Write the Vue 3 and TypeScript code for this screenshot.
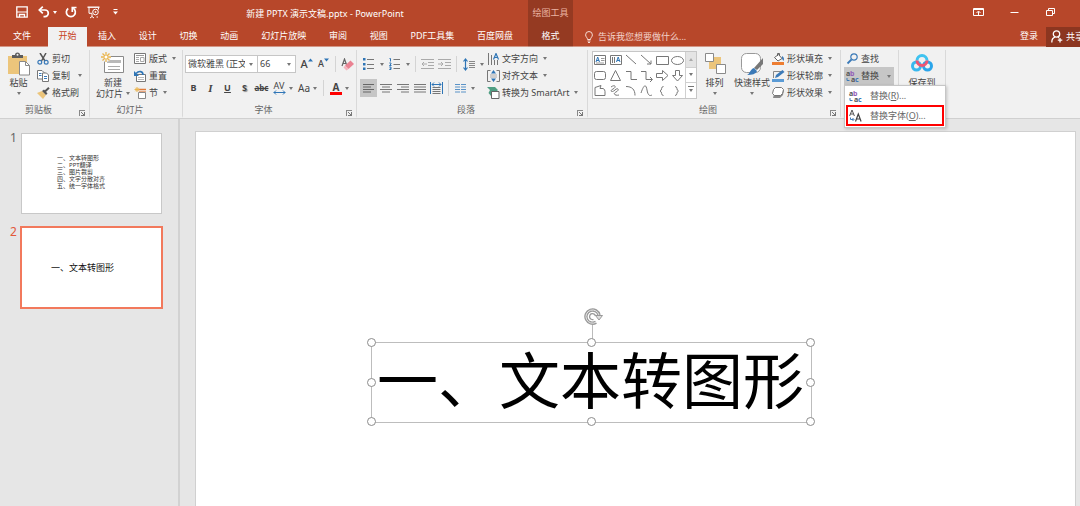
<script setup lang="ts">
import { ref } from 'vue'

const leadTabs: string[] = ['插入', '设计', '切换', '动画', '幻灯片放映', '审阅', '视图', 'PDF工具集', '百度网盘']
const outline: string[] = ['一、文本转图形', '二、PPT翻译', '三、图片裁剪', '四、文字分散对齐', '五、统一字体格式']
const handles: string[] = ['nw', 'n', 'ne', 'e', 'se', 's', 'sw', 'w']
const fontName = ref('微软雅黑 (正文)')
const fontSize = ref('66')
const query = ref('')
</script>

<template>
  <div class="app">
    <header class="header">
      <div class="head-main">
        <div class="title-row">
          <div class="quick">
            <button class="q q-save" aria-label="保存">
              <svg width="12" height="12" viewBox="0 0 12 12" fill="none" stroke="#fff"><path d="M.8.8h10.4v10.4H.8z" stroke-width="1.3" /><path d="M1 6h10" /><path d="M3.5 11V8.500h5V11" stroke-width="1.300" /></svg>
            </button>
            <button class="q q-undo" aria-label="撤消">
              <svg width="12" height="12" viewBox="0 0 12 12" fill="none" stroke="#fff" stroke-width="1.700"><path d="M1.500 4h5.500a3.200 3.200 0 0 1 0 6.600H5.500" /><path d="M4.800.6 1.300 4l3.500 3.400" /></svg>
              <i class="caret"></i>
            </button>
            <button class="q q-redo" aria-label="重复">
              <svg width="12" height="12" viewBox="0 0 12 12" fill="none" stroke="#fff" stroke-width="1.700"><path d="M3.200 2.500a4.500 4.500 0 1 0 5 -.2" /><path d="M7.300 6V1.500H11.500" /></svg>
            </button>
            <button class="q q-show" aria-label="从头开始">
              <svg width="13" height="13" viewBox="0 0 13 13" fill="none" stroke="#fff"><path d="M.5 1.200h12" stroke-width="1.400" /><path d="M2 1.500v5.800h3M5 7.500v3M3 12l2-1.500 2 1.500M11.500 1.500v2" /><circle cx="8.500" cy="6" r="2.800" /><path d="M7.800 4.700v2.600L9.900 6z" fill="#fff" stroke="none" /><path d="M9.500 11h1.500" /></svg>
            </button>
            <button class="q q-more" aria-label="自定义快速访问工具栏">
              <svg width="5" height="6" viewBox="0 0 5 6"><path d="M.5.5h4" stroke="#fff" /><path d="M0 2.500h5L2.500 5.500z" fill="#fff" /></svg>
            </button>
          </div>
          <div class="doc-title">新建 PPTX 演示文稿.pptx - PowerPoint</div>
        </div>
        <nav class="tabs">
          <button class="tab file">文件</button>
          <button class="tab active">开始</button>
          <div class="tab-list">
            <button v-for="t in leadTabs" :key="t" class="tab">{{ t }}</button>
          </div>
        </nav>
      </div>
      <div class="context">
        <div class="context-name">绘图工具</div>
        <button class="tab">格式</button>
      </div>
      <div class="head-side">
        <div class="window">
          <button aria-label="功能区显示选项"><svg width="11" height="8" viewBox="0 0 11 8" fill="none" stroke="#fff"><path d="M.5.5h10v7H.5zM.5 1.500h10" /><path d="M5.500 7V3.500M3.500 5l2-2 2 2" /></svg></button>
          <button aria-label="最小化"><svg width="9" height="8" viewBox="0 0 9 8"><path d="M.5 4.500h8" stroke="#fff" /></svg></button>
          <button aria-label="还原"><svg width="9" height="8" viewBox="0 0 9 8" fill="none" stroke="#fff"><path d="M.5 2.500h6v5h-6zM2.500 2.500v-2h6v5h-2" /></svg></button>
        </div>
        <div class="side-row">
          <label class="tell">
            <svg width="8" height="12" viewBox="0 0 8 12" fill="none" stroke="#f6dcd5"><path d="M2.500 8.500C2.500 6.500.6 6 .6 3.900a3.400 3.400 0 0 1 6.800 0C7.400 6 5.500 6.500 5.500 8.500zM2.500 10h3M3 11.500h2" /></svg>
            <input v-model="query" type="text" placeholder="告诉我您想要做什么..." aria-label="告诉我您想要做什么" />
          </label>
          <button class="login">登录</button>
          <button class="share">
            <svg width="12" height="13" viewBox="0 0 12 13" fill="none" stroke="#fff" stroke-width="1.300"><circle cx="5.500" cy="4" r="3.200" /><path d="M.8 12.500c0-3.200 1.700-5 3.400-5.300M7 7.300l1 .8M9 8v4.500M6.800 10.200h4.500" /></svg>
            <span>共享</span>
          </button>
        </div>
      </div>
    </header>

    <div class="ribbon">
      <section class="group g-clip">
        <div class="body">
          <button class="large">
            <svg width="24" height="24" viewBox="0 0 24 24"><path d="M1 4h19v18H1z" fill="#ecc57b" /><path d="M5 6V3h3a2.500 2.500 0 0 1 5 0h3v3z" fill="#5c5c5c" /><circle cx="10.500" cy="2.800" r="1" fill="#f1f1f1" /><path d="M12.500 9.500h6l4 4v9.500h-10z" fill="#fff" stroke="#8a8a8a" /><path d="M18.500 9.500v4h4" fill="none" stroke="#8a8a8a" /></svg>
            <span>粘贴</span><i class="caret"></i>
          </button>
          <div class="list">
            <button class="item">
              <svg width="13" height="12" viewBox="0 0 13 12" fill="none"><path d="M3 0l5 8M9 0L4.500 8" stroke="#555" stroke-width="1.500" /><circle cx="2.800" cy="9.200" r="1.900" stroke="#3b7ab8" stroke-width="1.200" /><circle cx="9.200" cy="9.200" r="1.900" stroke="#3b7ab8" stroke-width="1.200" /></svg>
              <span>剪切</span>
            </button>
            <button class="item">
              <svg width="13" height="12" viewBox="0 0 13 12" fill="#fff" stroke="#777"><path d="M.5.5h4.500l2 2v6.500H.5z" /><path d="M2 3.500h2.500M2 5.500h2.500" stroke="#3b7ab8" /><path d="M5.500 3h4l2 2v6.500h-6z" /><path d="M7 6.500h3M7 8.500h3" stroke="#3b7ab8" /></svg>
              <span>复制</span><i class="caret wide"></i>
            </button>
            <button class="item">
              <svg width="13" height="12" viewBox="0 0 13 12"><path d="M0 6l5-2 4 4-3 4z" fill="#ecc57b" /><path d="M5 4l2-1.500 3.500 4L9 8z" fill="#555" /><path d="M8 4.500L12 .8" stroke="#555" stroke-width="2" /></svg>
              <span>格式刷</span>
            </button>
          </div>
        </div>
        <footer>剪贴板<button class="launch" aria-label="剪贴板选项"></button></footer>
      </section>

      <section class="group g-slides">
        <div class="body">
          <button class="large">
            <svg width="24" height="24" viewBox="0 0 24 24"><path d="M3.500 4.500h19v16h-19z" fill="#fff" stroke="#8a8a8a" /><path d="M6 8h14v3H6z" fill="#b9b9b9" /><path d="M7 14.500h12M7 17.500h12" stroke="#aaa" /><circle cx="5" cy="5" r="5" fill="#f1f1f1" /><path d="M5 0v10M0 5h10M1.500 1.500l7 7M8.500 1.500l-7 7" stroke="#eab54e" stroke-width="1.300" /><circle cx="5" cy="5" r="1.500" fill="#fff" /></svg>
            <span>新建</span>
            <span class="with-caret">幻灯片<i class="caret"></i></span>
          </button>
          <div class="list">
            <button class="item">
              <svg width="13" height="12" viewBox="0 0 13 12" fill="#fff" stroke="#777"><path d="M.5.5h11v10H.5z" /><path d="M2 2.500h8" stroke="#999" /><path d="M2 4.500h3M2 6.500h3M2 8.500h3" stroke="#aaa" /><path d="M6.500 4.500h3.500v4H6.500z" stroke="#aaa" /></svg>
              <span>版式</span><i class="caret"></i>
            </button>
            <button class="item">
              <svg width="13" height="12" viewBox="0 0 13 12" fill="none"><path d="M2.500 4.500h9v7h-9z" fill="#fff" stroke="#777" /><path d="M4 7.500h6M4 9.500h6" stroke="#bbb" /><path d="M2 3.500C5 .5 9 1 9 5" stroke="#2e75b6" stroke-width="1.600" /><path d="M0 1v5h5z" fill="#2e75b6" /></svg>
              <span>重置</span>
            </button>
            <button class="item">
              <svg width="13" height="12" viewBox="0 0 13 12"><path d="M4 2.500h8" stroke="#e07b39" stroke-width="1.500" /><path d="M4.500 5.500h7v6h-7z" fill="#fff" stroke="#888" /><path d="M5 4.500h7" stroke="#e9a77f" /><path d="M3 0v5M.5 2.500h5M1.300.8l3.400 3.400M4.700.8L1.300 4.200" stroke="#eab54e" /></svg>
              <span>节</span><i class="caret"></i>
            </button>
          </div>
        </div>
        <footer>幻灯片</footer>
      </section>

      <section class="group g-font">
        <div class="body">
          <div class="rows">
            <div class="row">
              <span class="pick name"><select v-model="fontName" aria-label="字体"><option>微软雅黑 (正文)</option></select></span>
              <span class="pick size"><select v-model="fontSize" aria-label="字号"><option>66</option></select></span>
              <button class="tool gap" aria-label="增大字号"><b class="glyph">A</b><svg class="sup" width="5" height="4" viewBox="0 0 5 4"><path d="M0 3.500L2.500.5 5 3.500z" fill="#2e75b6" /></svg></button>
              <button class="tool" aria-label="减小字号"><b class="glyph small">A</b><svg class="sup" width="5" height="4" viewBox="0 0 5 4"><path d="M0 .5h5L2.500 3.500z" fill="#2e75b6" /></svg></button>
              <i class="sep"></i>
              <button class="tool" aria-label="清除所有格式">
                <svg width="13" height="13" viewBox="0 0 13 13"><path d="M1 8L3.500 1 6 8M2 5.500h3" fill="none" stroke="#666" stroke-width="1.200" /><path d="M9.500 2.500L13 6 7.500 11 4 7.500z" fill="#ea8292" /><path d="M4 7.500L7.500 11 5.500 12.500 2.500 9.500z" fill="#f4b4bd" /></svg>
              </button>
            </div>
            <div class="row">
              <button class="tool"><b>B</b></button>
              <button class="tool"><em>I</em></button>
              <button class="tool"><u>U</u></button>
              <button class="tool"><b class="shadow">S</b></button>
              <button class="tool"><s>abc</s></button>
              <button class="tool drop" aria-label="字符间距"><span class="av">AV<svg width="13" height="5" viewBox="0 0 13 5" fill="none" stroke="#2e75b6"><path d="M.8 2.500h11.400M3 .5l-2 2 2 2M10 .5l2 2-2 2" /></svg></span><i class="caret"></i></button>
              <button class="tool drop"><span class="aa">Aa</span><i class="caret"></i></button>
              <i class="sep"></i>
              <button class="tool drop" aria-label="字体颜色"><span class="ink">A</span><i class="caret"></i></button>
            </div>
          </div>
        </div>
        <footer>字体<button class="launch" aria-label="字体选项"></button></footer>
      </section>

      <section class="group g-para">
        <div class="body">
          <div class="rows">
            <div class="row">
              <button class="tool drop" aria-label="项目符号"><svg width="12" height="12" viewBox="0 0 12 12"><path d="M4 1.500h7M4 6.500h7M4 10.500h7" stroke="#777" /><path d="M0 0h2.500v2.500H0zM0 5h2.500v2.500H0zM0 9.500h2.500V12H0z" fill="#2e75b6" /></svg><i class="caret"></i></button>
              <button class="tool drop" aria-label="编号"><svg width="12" height="12" viewBox="0 0 12 12"><path d="M4.500 1.500H11M4.500 6.500H11M4.500 10.500H11" stroke="#777" /><path d="M.5.5h1v3M.3 5h1.700v1L.5 7.500H2.500M.3 9h1.700v2.500H.3M.8 10.200H2" stroke="#2e75b6" fill="none" /></svg><i class="caret"></i></button>
              <i class="sep"></i>
              <button class="tool" aria-label="减少缩进"><svg width="13" height="10" viewBox="0 0 13 10" stroke="#aaa" fill="none"><path d="M0 .5h13M7 3.500h6M7 6.500h6M0 9.500h13M1 5h5M3 3L1 5l2 2" /></svg></button>
              <button class="tool" aria-label="增加缩进"><svg width="13" height="10" viewBox="0 0 13 10" stroke="#aaa" fill="none"><path d="M0 .5h13M7 3.500h6M7 6.500h6M0 9.500h13M0 5h5M3 3l2 2-2 2" /></svg></button>
              <i class="sep"></i>
              <button class="tool drop" aria-label="行距"><svg width="12" height="13" viewBox="0 0 12 13" fill="none"><path d="M2.500 1v11M.5 3.500l2-2.500 2 2.500M.5 9.500l2 2.500 2-2.500" stroke="#2e75b6" stroke-width="1.200" /><path d="M6 3.500h6M6 5.500h6M6 7.500h6M6 9.500h6" stroke="#888" /></svg><i class="caret"></i></button>
            </div>
            <div class="row">
              <button class="tool on" aria-label="左对齐"><svg width="12" height="9" viewBox="0 0 12 9" stroke="#666"><path d="M0 .5h11M0 3h8M0 5.500h11M0 8h8" /></svg></button>
              <button class="tool" aria-label="居中"><svg width="12" height="9" viewBox="0 0 12 9" stroke="#777"><path d="M0 .5h12M2 3h8M0 5.500h12M2 8h8" /></svg></button>
              <button class="tool" aria-label="右对齐"><svg width="12" height="9" viewBox="0 0 12 9" stroke="#777"><path d="M0 .5h12M4 3h8M0 5.500h12M4 8h8" /></svg></button>
              <button class="tool" aria-label="两端对齐"><svg width="12" height="9" viewBox="0 0 12 9" stroke="#777"><path d="M0 .5h12M0 3h12M0 5.500h12M0 8h12" /></svg></button>
              <button class="tool" aria-label="分散对齐"><svg width="13" height="12" viewBox="0 0 13 12" fill="none"><path d="M.5 0v12M12.500 0v12M2 2.500h9M4 .5l-2 2 2 2M9 .5l2 2-2 2" stroke="#2e75b6" /><path d="M2.500 5.500h8M2.500 7.500h8M2.500 9.500h8M2.500 11.500h8" stroke="#777" /></svg></button>
              <i class="sep"></i>
              <button class="tool drop" aria-label="分栏"><svg width="11" height="9" viewBox="0 0 11 9" stroke="#5b93c7"><path d="M0 .5h5M0 3h5M0 5.500h5M0 8h5M6 .5h5M6 3h5M6 5.500h5M6 8h5" /></svg><i class="caret"></i></button>
            </div>
          </div>
          <div class="list">
            <button class="item">
              <svg width="13" height="12" viewBox="0 0 13 12" fill="none"><path d="M1.500 0v12M4.500 2v10M7.500 7v5M10.500 7v5" stroke="#777" /><path d="M6.500 6.500L9 .5l2.500 6M7.300 4.500h3.400" stroke="#2e75b6" stroke-width="1.200" /></svg>
              <span>文字方向</span><i class="caret"></i>
            </button>
            <button class="item">
              <svg width="13" height="12" viewBox="0 0 13 12" fill="none"><path d="M3.500.5h-3v11h3M9.500.5h3v11h-3" stroke="#777" /><path d="M3 5h7M3 7h7" stroke="#aaa" /><path d="M4 3.500L6.500 0 9 3.500zM4 8.500L6.500 12 9 8.500z" fill="#2e75b6" /></svg>
              <span>对齐文本</span><i class="caret"></i>
            </button>
            <button class="item">
              <svg width="13" height="12" viewBox="0 0 13 12"><path d="M0 0h8l3 3-3 3H4v3L1.500 6 3 3z" fill="#4f9e83" /><path d="M4.500 4.500h7.500v7H4.500z" fill="#fff" stroke="#666" /></svg>
              <span>转换为 SmartArt</span><i class="caret"></i>
            </button>
          </div>
        </div>
        <footer>段落<button class="launch" aria-label="段落选项"></button></footer>
      </section>

      <section class="group g-draw">
        <div class="body">
          <div class="gallery">
            <svg class="shapes" width="92" height="45" viewBox="0 0 92 45" fill="none" stroke="#777">
              <path d="M1.500 3.500h11v9h-11z" /><path d="M3 10l1.700-5L6.500 10M3.500 8.500h2.500" stroke="#2e75b6" /><path d="M8 6.500h3.500M8 8.500h3.500M3 11h8" stroke="#999" />
              <path d="M17.500 3.500h11v9h-11z" /><path d="M23.500 10l1.700-5 1.800 5M24 8.500h2.500" stroke="#2e75b6" /><path d="M19.500 5v6M21.500 5v6" />
              <path d="M33 3l10 9" /><path d="M48 3l10 9M58 8.500V12h-4" />
              <path d="M63.500 4.500h12v8h-12z" /><ellipse cx="84.500" cy="8.500" rx="6" ry="4" />
              <rect x="1.500" y="19.500" width="11" height="8" rx="2" /><path d="M17.500 28.500l5-10 5 10z" />
              <path d="M33 19.500h5v8h6" /><path d="M48 19.500h5v8h6M57 25l2.500 2.500L57 30" />
              <path d="M63.500 21.500h6v-3l5.500 5-5.500 5v-3h-6z" /><path d="M82.500 18.500h4v5h3l-5 5.500-5-5.500h3z" />
              <path d="M2 43.500v-8l6-2-1 3h3a3 3 0 0 1 2 3v4z" /><path d="M18 35c4-3 6 0 2 2s-1 4 2 1 5 0 1 2 0 4 3 3" />
              <path d="M33 34.500c6 0 9 3 9 9" /><path d="M48 41c3-9 5-9 6-3s3 6 5 5" />
              <path d="M70.500 34.500c-3 0-1 4-3.500 4.500 2.500.500.500 4.500 3.500 4.500" /><path d="M82 34.500c3 0 1 4 3.500 4.500-2.500.500-.500 4.500-3.500 4.500" />
            </svg>
            <div class="scroller">
              <button class="dim" aria-label="上一行"><i class="caret up"></i></button>
              <button aria-label="下一行"><i class="caret"></i></button>
              <button aria-label="其他形状"><i class="caret lined"></i></button>
            </div>
          </div>
          <button class="large arrange">
            <svg width="24" height="24" viewBox="0 0 24 24"><path d="M6 5h12v12H6z" fill="#ecc57b" /><path d="M2.500 1.500h8v8h-8zM13.500 12.500h9v9h-9z" fill="#fff" stroke="#8a8a8a" /></svg>
            <span>排列</span><i class="caret"></i>
          </button>
          <button class="large quickstyle">
            <svg width="24" height="24" viewBox="0 0 24 24"><rect x="1.500" y="1.500" width="19" height="19" rx="5" fill="#fff" stroke="#999" /><path d="M23 6v6l-6 6-3-2z" fill="#777" /><path d="M14 16l3 3c-1 3-5 4-10 4 3-1 3-6 7-7z" fill="#3b7ab8" /></svg>
            <span>快速样式</span><i class="caret"></i>
          </button>
          <div class="list">
            <button class="item">
              <svg width="13" height="12" viewBox="0 0 13 12"><path d="M0 9h12v3H0z" fill="#ed7d31" /><path d="M2.500 4.500l4-3 3.500 4-4 2.500z" fill="#fff" stroke="#666" /><path d="M5.500 3V.5h2V3" fill="none" stroke="#666" /><path d="M10 3c2 1 2.500 3 1.500 5-1-1-2-3-1.500-5z" fill="#3b7ab8" /></svg>
              <span>形状填充</span><i class="caret"></i>
            </button>
            <button class="item">
              <svg width="13" height="12" viewBox="0 0 13 12"><path d="M0 9h12v3H0z" fill="#5b9bd5" /><path d="M1.500 8V1.500H9" fill="none" stroke="#888" /><path d="M3 8l1-3L10.500 0l2 2L6 7z" fill="#3b7ab8" /></svg>
              <span>形状轮廓</span><i class="caret"></i>
            </button>
            <button class="item">
              <svg width="13" height="12" viewBox="0 0 13 12"><path d="M3 3h9l-1 5-3 3H1z" fill="#888" /><path d="M3.500.5h6l2 2-1 4-2 2h-6l-2-2 1-4z" fill="#fff" stroke="#777" /></svg>
              <span>形状效果</span><i class="caret"></i>
            </button>
          </div>
        </div>
        <footer>绘图<button class="launch" aria-label="绘图选项"></button></footer>
      </section>

      <section class="group g-edit">
        <div class="body list">
          <button class="item">
            <svg width="13" height="12" viewBox="0 0 13 12" fill="none" stroke="#3b7ab8"><circle cx="8" cy="4" r="3.200" stroke-width="1.200" /><path d="M5.500 6.500L1.500 10.500" stroke-width="1.800" /></svg>
            <span>查找</span>
          </button>
          <div class="replace">
            <button class="item pressed" aria-expanded="true">
              <svg class="swap" width="13" height="13" viewBox="0 0 13 13"><text x="0" y="6" class="t-dark">a</text><text x="4" y="6" class="t-violet">b</text><text x="5" y="12" class="t-dark">a</text><text x="9" y="12" class="t-blue">c</text><path d="M1 8v2.500h2.500" fill="none" stroke="#3b7ab8" /></svg>
              <span>替换</span><i class="caret wide"></i>
            </button>
            <div class="menu" role="menu">
              <button role="menuitem">
                <svg class="swap" width="13" height="13" viewBox="0 0 13 13"><text x="0" y="6" class="t-dark">a</text><text x="4" y="6" class="t-violet">b</text><text x="5" y="12" class="t-dark">a</text><text x="9" y="12" class="t-blue">c</text><path d="M1 8v2.500h2.500" fill="none" stroke="#3b7ab8" /></svg>
                <span>替换(<u>R</u>)...</span>
              </button>
              <button role="menuitem" class="marked">
                <svg width="13" height="13" viewBox="0 0 13 13" fill="none"><path d="M.6 7L3 1l2.400 6M1.500 5h3" stroke="#555" /><path d="M6.500 12.500L9.300 5l2.800 7.500M7.500 10h3.600" stroke="#444" stroke-width="1.200" /><path d="M1.500 8.500v2h3M3.500 9l1.500 1.500L3.500 12" stroke="#3b7ab8" /></svg>
                <span>替换字体(<u>O</u>)...</span>
              </button>
            </div>
          </div>
        </div>
      </section>

      <section class="group g-save">
        <div class="body">
          <button class="large">
            <svg width="24" height="24" viewBox="0 0 24 24" fill="none" stroke-width="3"><path d="M7 8.500a5 5 0 0 1 10 0" stroke="#3fc3f0" /><circle cx="6.500" cy="14" r="4" stroke="#39b8ee" /><circle cx="17.500" cy="14" r="4" stroke="#2ba5ea" /><path d="M7 8.500a5 5 0 0 0 10 0" stroke="#ee5573" /></svg>
            <span>保存到</span>
          </button>
        </div>
      </section>
    </div>

    <main class="work">
      <aside class="thumbs">
        <div class="thumb">
          <span class="num">1</span>
          <div class="mini"><p v-for="line in outline" :key="line">{{ line }}</p></div>
        </div>
        <div class="thumb current">
          <span class="num">2</span>
          <div class="mini">一、文本转图形</div>
        </div>
      </aside>
      <div class="stage">
        <div class="slide">
          <div class="textbox">
            <svg class="rotate" width="20" height="32" viewBox="0 0 20 32" fill="none"><path d="M9.500 17v15" stroke="#bbb" /><path d="M13 14.200a6.600 6.600 0 1 1 3-7" stroke="#9a9a9a" stroke-width="3.400" /><path d="M13 14.200a6.600 6.600 0 1 1 3-7" stroke="#e6e6e6" /><path d="M12.500 7.500h7L16 12z" fill="#ddd" stroke="#999" /><path d="M10.500 11.500a3 3 0 1 1 2-3.500" stroke="#999" stroke-width="1.300" /></svg>
            <h1>一、文本转图形</h1>
            <i v-for="h in handles" :key="h" class="handle" :class="h"></i>
          </div>
        </div>
      </div>
    </main>
  </div>
</template>

<style>
body { margin: 0; overflow: hidden; }
</style>

<style scoped>
.app {
  display: flex;
  flex-direction: column;
  height: 100vh;
  background: #e6e6e6;
  color: #444;
  font: 9px/12px "Noto Sans", "Noto Sans CJK SC", sans-serif;
}
* { box-sizing: border-box; }
button, input, select {
  margin: 0;
  padding: 0;
  border: 0;
  background: none;
  color: inherit;
  font: inherit;
  white-space: nowrap;
}
svg { display: block; flex: none; }
p, h1 { margin: 0; }

.header {
  display: flex;
  flex: none;
  background: #b7472a;
  box-shadow: inset 0 -1px #d39686;
  color: #fff;
}
.head-main { flex: 0 0 528px; }
.title-row { display: flex; height: 27px; align-items: center; }
.quick { display: flex; align-items: center; padding: 0 3px 3px 16px; }
.q { display: flex; align-items: center; height: 14px; }
.q-save { width: 22px; }
.q-undo { width: 27px; gap: 3px; }
.q-redo { width: 22px; }
.q-show { width: 26px; }
.q-more { width: 6px; }
.doc-title { flex: 1; text-align: center; }
.tabs { display: flex; }
.tab { height: 20px; padding: 0 11px 2px; }
.tab.file { width: 48px; padding: 0 17px 2px 13px; }
.tab.active { width: 39px; padding: 0 0 2px; background: #f1f1f1; color: #c8431f; }
.tab-list { display: flex; flex: 1; justify-content: space-between; padding-right: 4px; }
.context { flex: 0 0 45px; background: #953a22; box-shadow: inset 0 -1px #bf8c7f; text-align: center; }
.context-name { height: 27px; line-height: 26px; color: #eab3a3; }
.head-side { flex: 1; min-width: 0; }
.window { display: flex; justify-content: flex-end; height: 27px; padding: 0 12px 3px 0; }
.window button { display: flex; align-items: center; justify-content: center; width: 36px; }
.side-row { display: flex; height: 20px; align-items: center; }
.tell { display: flex; flex: 1; align-items: center; gap: 5px; padding: 0 0 1px 12px; }
.tell input { width: 120px; outline: 0; }
.tell input::placeholder { color: #f3d3ca; opacity: 1; }
.login { margin-right: 8px; padding-bottom: 2px; }
.share { display: flex; align-items: center; gap: 3px; width: 34px; height: 20px; padding: 0 0 1px 5px; overflow: hidden; background: #8c3620; }

.ribbon { display: flex; flex: none; padding-top: 3px; background: #f1f1f1; border-bottom: 1px solid #d0d0d0; }
.group { display: flex; flex: none; flex-direction: column; height: 68px; border-right: 1px solid #d9d9d9; border-bottom: 2px solid #f1f1f1; }
.g-clip { min-width: 90px; }
.g-slides { min-width: 93px; }
.g-font { min-width: 174px; }
.g-para { min-width: 231px; }
.g-draw { min-width: 253px; }
.g-edit { min-width: 58px; }
.g-save { min-width: 47px; }
.body { display: flex; flex: none; height: 51px; }
.group footer { position: relative; height: 15px; padding: 3px 12px 0 0; text-align: center; color: #666; }
.launch { position: absolute; right: 4px; bottom: 0; width: 6px; height: 6px; border-top: 1px solid #888; border-left: 1px solid #888; }
.launch::after { content: ""; position: absolute; right: 0; bottom: 0; width: 3px; height: 3px; border-right: 1px solid #777; border-bottom: 1px solid #777; background: linear-gradient(45deg, transparent 40%, #777 40% 60%, transparent 60%); }

.caret { display: block; flex: none; width: 0; height: 0; border: 2px solid transparent; border-top: 3px solid #777; border-bottom: 0; }
.header .caret { border-top-color: #fff; }
.caret.up { border-top: 0; border-bottom: 3px solid #aaa; }
.caret.lined { position: relative; }
.caret.lined::before { content: ""; position: absolute; left: -3px; top: -6px; width: 6px; height: 1px; background: #777; }

.large { display: flex; flex-direction: column; align-items: center; padding-top: 2px; line-height: 11px; }
.large svg { margin-bottom: 1px; }
.large > .caret { margin-top: 4px; }
.with-caret { display: flex; align-items: center; gap: 3px; }
.g-clip .large { width: 37px; }
.g-slides .body { padding-left: 2px; }
.g-slides .large { width: 42px; }
.list { display: flex; flex-direction: column; align-items: flex-start; }
.item { display: flex; align-items: center; height: 17px; gap: 2px; }
.item .caret { margin-left: 3px; }
.item .caret.wide { margin-left: 6px; }

.rows { display: flex; flex-direction: column; gap: 6px; padding-top: 5px; }
.row { display: flex; align-items: center; height: 18px; }
.g-font .body { padding-left: 2px; }
.pick { position: relative; height: 18px; border: 1px solid #c6c6c6; background: #fff; }
.pick select { width: 100%; height: 16px; padding: 0 12px 0 2px; appearance: none; outline: 0; overflow: hidden; }
.pick::after { content: ""; position: absolute; right: 4px; top: 7px; border: 2px solid transparent; border-top: 3px solid #777; border-bottom: 0; }
.pick.name { width: 73px; }
.pick.size { width: 38px; border-left: 0; }
.tool { display: flex; align-items: center; justify-content: center; width: 17px; height: 18px; }
.tool.gap { margin-left: 2px; }
.tool.drop { width: 25px; gap: 3px; }
.g-para .tool.drop { width: 26px; gap: 5px; }
.tool.on { background: #c6c6c6; }
.tool em { font-family: "Liberation Serif", serif; font-size: 11px; font-weight: bold; }
.tool s { font-size: 8px; font-weight: bold; }
.tool u { font-weight: bold; }
.glyph { font-size: 11px; font-weight: 500; }
.glyph.small { font-size: 9px; }
.sup { align-self: flex-start; margin-top: 3px; }
.shadow { text-shadow: 1px 1px 1px #888; }
.av { display: flex; flex-direction: column; align-items: center; line-height: 9px; }
.aa { font-size: 10px; }
.ink { width: 12px; border-bottom: 3px solid #f00; line-height: 10px; font-size: 10px; font-weight: bold; text-align: center; }
.sep { flex: none; width: 1px; height: 16px; margin: 0 3px; background: #d4d4d4; }
.g-para .body { padding-left: 3px; }
.g-para .rows { width: 127px; }

.g-draw .body { padding-left: 4px; }
.gallery { display: flex; height: 48px; margin-top: 1px; border: 1px solid #c6c6c6; background: #fff; }
.scroller { display: grid; width: 11px; border-left: 1px solid #d0d0d0; }
.scroller button { display: flex; align-items: center; justify-content: center; border-bottom: 1px solid #d0d0d0; }
.scroller button:last-child { border-bottom: 0; }
.scroller .dim { background: #e4e4e4; }
.arrange { width: 35px; }
.quickstyle { width: 40px; }

.g-edit .body { padding-left: 3px; }
.g-edit .item { padding-left: 2px; }
.replace { position: relative; }
.item.pressed { width: 50px; height: 18px; background: #c6c6c6; }
.menu { position: absolute; z-index: 2; top: 18px; left: 0; width: 102px; padding: 1px; border: 1px solid #c6c6c6; background: #fff; box-shadow: 1px 1px 3px #0003; color: #666; }
.menu button { display: flex; align-items: center; gap: 8px; width: 100%; height: 18px; padding-left: 3px; }
.menu .marked { height: 21px; padding-left: 1px; border: 2px solid #f00; }
.swap { overflow: visible; }
.t-dark, .t-violet, .t-blue { font: bold 7px "Noto Sans", sans-serif; fill: #555; }
.t-violet { fill: #9560b8; }
.t-blue { fill: #3b7ab8; }
.g-save .large { width: 46px; }

.work { display: flex; flex: 1; min-height: 0; }
.thumbs { flex: 0 0 180px; padding: 14px 16px 0 10px; border-right: 2px solid #d2d2d2; }
.thumb { display: flex; gap: 4px; }
.num { width: 7px; font-size: 12px; line-height: 10px; color: #666; }
.mini { display: flex; flex: 1; flex-direction: column; height: 81px; padding: 21px 0 0 35px; border: 1px solid #c8c8c8; background: #fff; font-size: 6px; line-height: 7px; color: #333; }
.current { margin-top: 12px; gap: 3px; }
.current .num { color: #e2583a; line-height: 11px; }
.current .mini { justify-content: center; height: 83px; margin-right: -1px; padding: 0 0 0 29px; border: 2px solid #f2795c; font-size: 9px; line-height: 12px; color: #111; }
.stage { display: flex; flex: 1; padding: 12px 4px 0 15px; overflow: hidden; }
.slide { position: relative; flex: 1; border: 1px solid #d0d0d0; border-bottom: 0; background: #fff; }
.textbox { position: absolute; left: 175px; top: 210px; width: 441px; height: 81px; border: 1px solid #bdbdbd; }
.textbox h1 { padding-left: 5px; color: #000; font-size: 61px; font-weight: 400; line-height: 76px; white-space: nowrap; }
.rotate { position: absolute; left: 211px; top: -35px; }
.handle { position: absolute; width: 9px; height: 9px; margin: -5px; border: 1px solid #8c8c8c; border-radius: 50%; background: #fff; left: 50%; top: 50%; }
.handle.nw, .handle.n, .handle.ne { top: 0; }
.handle.sw, .handle.s, .handle.se { top: 100%; }
.handle.nw, .handle.w, .handle.sw { left: 0; }
.handle.ne, .handle.e, .handle.se { left: 100%; }
</style>
